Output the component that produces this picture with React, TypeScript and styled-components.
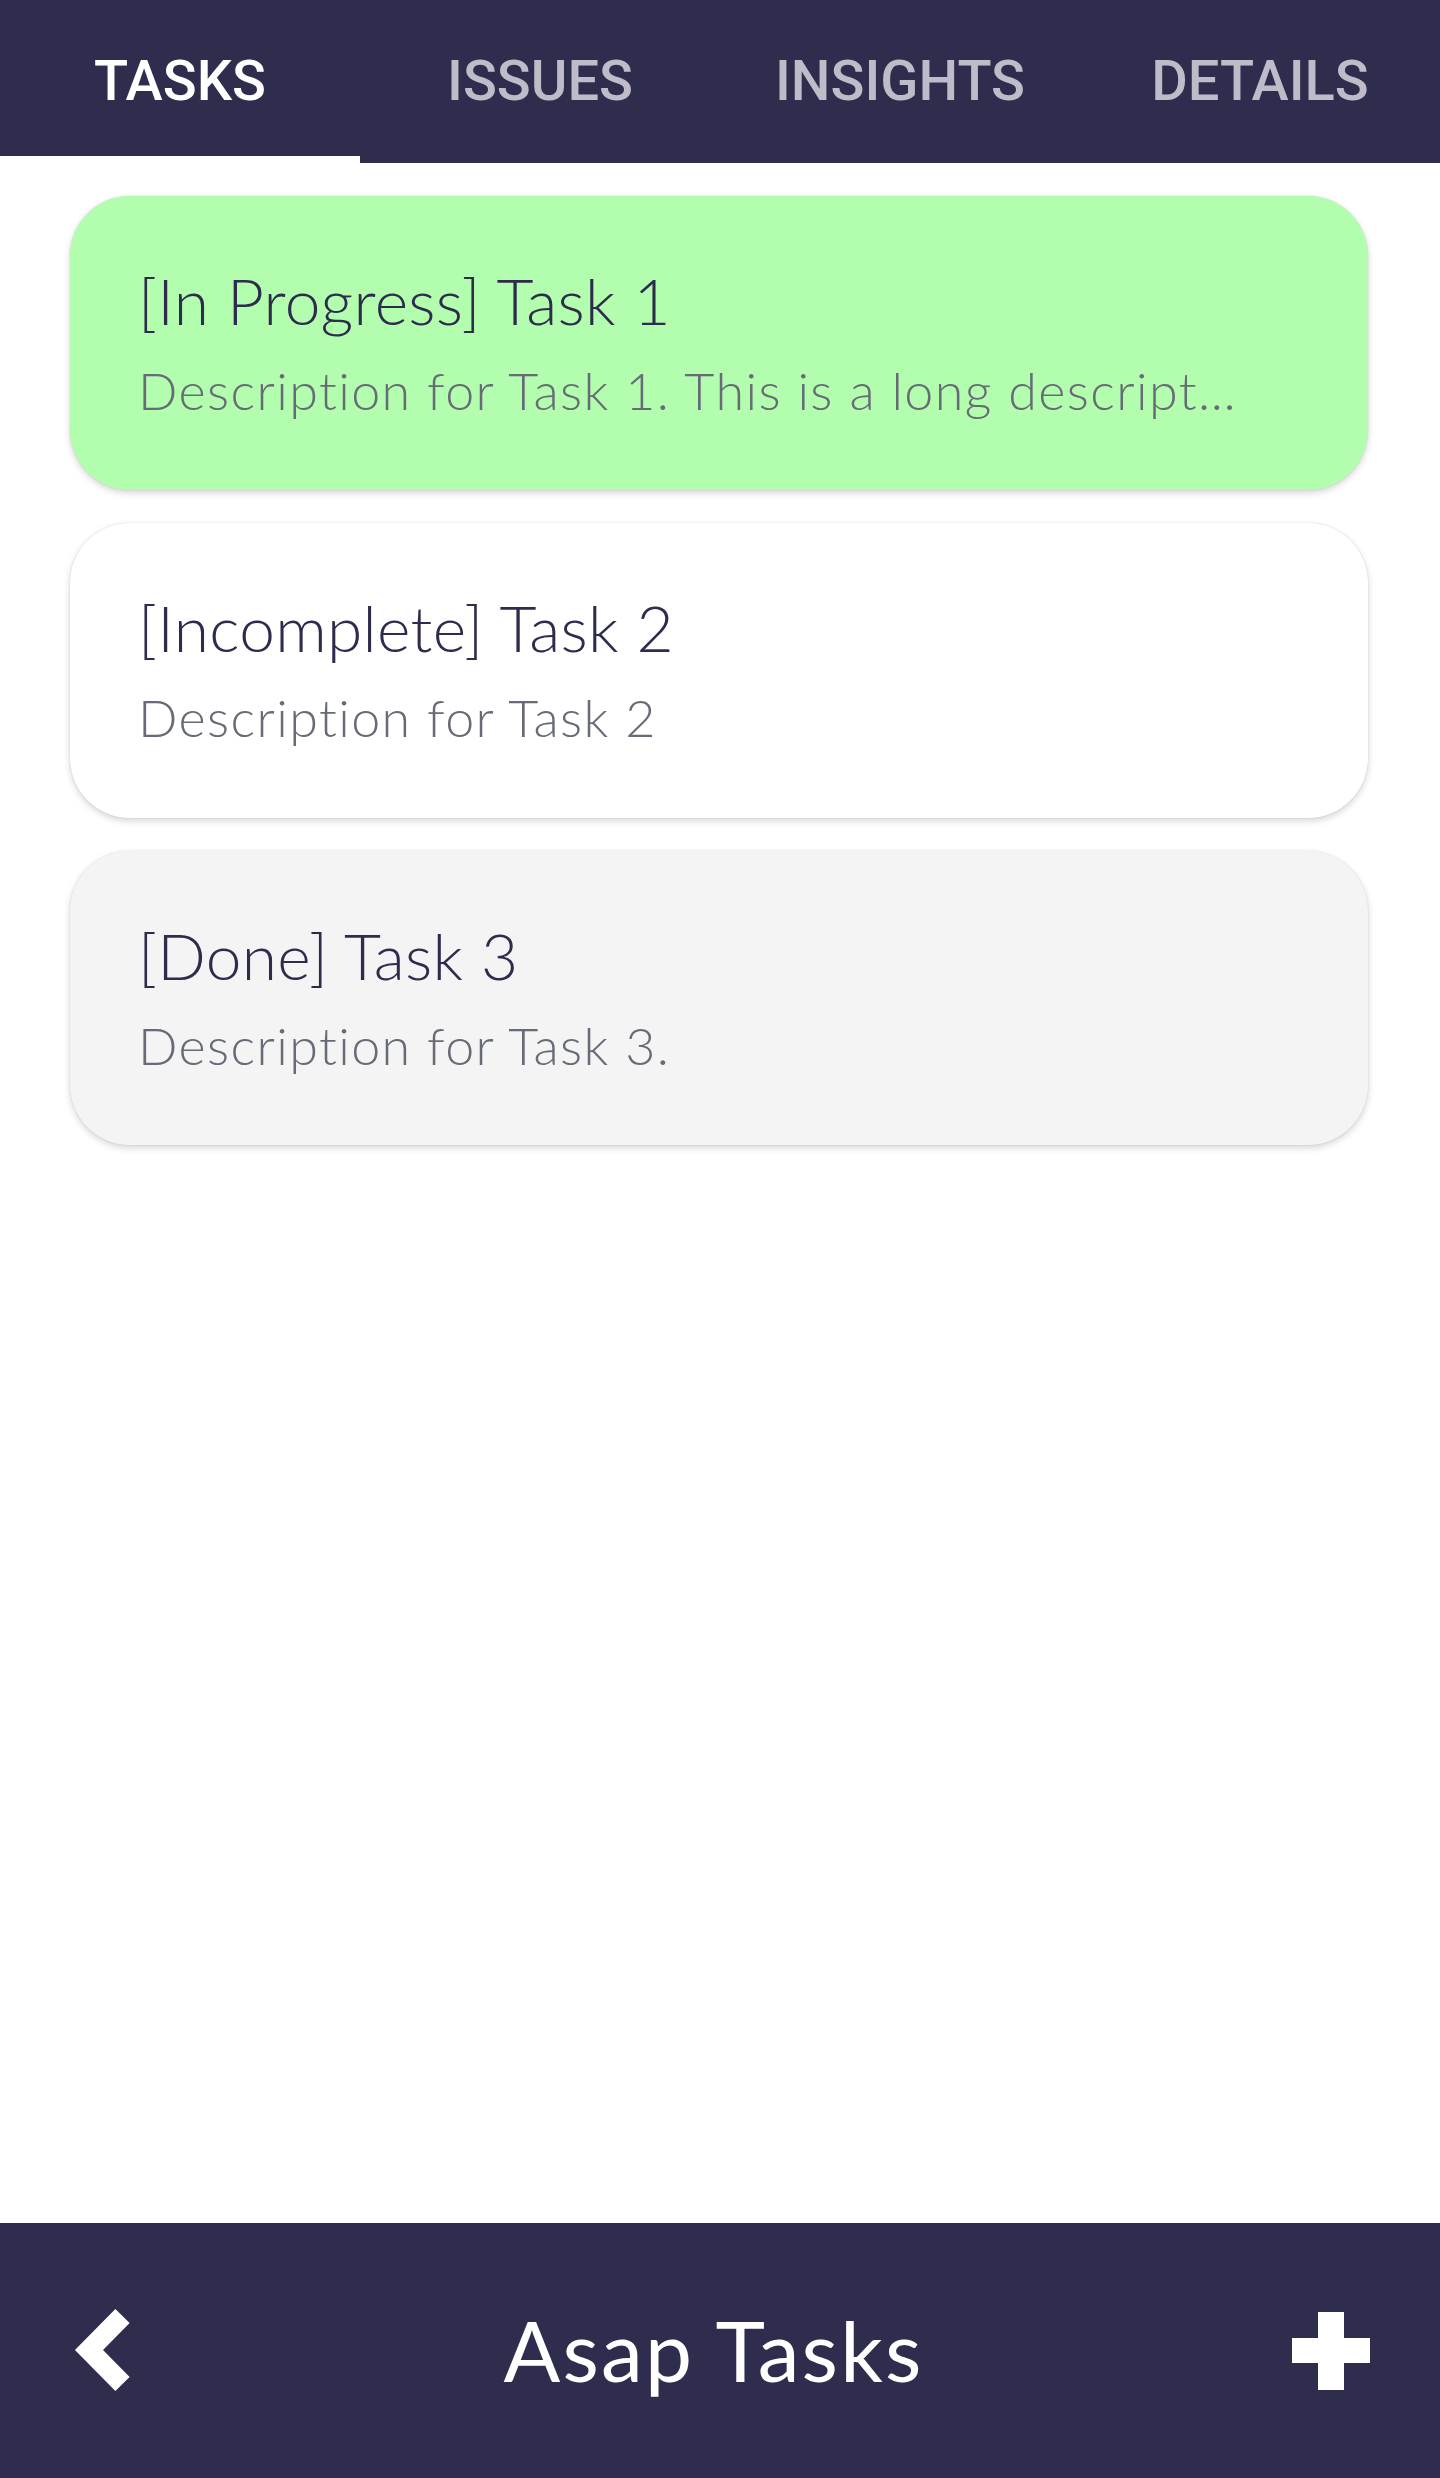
import React from "react";
import styled, { createGlobalStyle } from "styled-components";

type Status = "In Progress" | "Incomplete" | "Done";

interface TaskItem {
  id: number;
  title: string;
  description: string;
  status: Status;
}

const tasks: TaskItem[] = [
  {
    id: 1,
    title: "Task 1",
    description:
      "Description for Task 1. This is a long description that keeps going past the edge of the card.",
    status: "In Progress",
  },
  { id: 2, title: "Task 2", description: "Description for Task 2", status: "Incomplete" },
  { id: 3, title: "Task 3", description: "Description for Task 3.", status: "Done" },
];

const tabs = ["Tasks", "Issues", "Insights", "Details"];

const cardColors: Record<Status, string> = {
  "In Progress": "#b2fdae",
  Incomplete: "#ffffff",
  Done: "#f4f4f4",
};

const GlobalStyle = createGlobalStyle`
  html, body {
    margin: 0;
    padding: 0;
    background: #ffffff;
  }
  * {
    box-sizing: border-box;
  }
`;

const Screen = styled.div`
  display: flex;
  flex-direction: column;
  min-height: 100vh;
  font-family: Lato, "Open Sans", sans-serif;
`;

const TabBar = styled.nav`
  display: flex;
  height: 163px;
  background: #2f2d4d;
`;

const Tab = styled.button<{ active: boolean }>`
  flex: 1;
  border: none;
  background: transparent;
  padding: 0 0 2px;
  font-family: Roboto, "Liberation Sans", sans-serif;
  font-weight: 500;
  font-size: 56px;
  letter-spacing: 0;
  text-transform: uppercase;
  color: ${(props) => (props.active ? "#ffffff" : "#bebcc9")};
  box-shadow: ${(props) => (props.active ? "inset 0 -7px 0 #ffffff" : "none")};
  cursor: pointer;
`;

const TaskList = styled.main`
  flex: 1;
  display: flex;
  flex-direction: column;
  gap: 33px;
  padding: 33px 72px 33px 70px;
`;

const Card = styled.div<{ status: Status }>`
  display: flex;
  flex-direction: column;
  gap: 26px;
  padding: 73px 124px 69px 68px;
  border-radius: 60px;
  background: ${(props) => cardColors[props.status]};
  box-shadow: 0 3px 7px rgba(0, 0, 0, 0.16), 0 0 2px rgba(0, 0, 0, 0.12);
`;

const CardTitle = styled.h3`
  margin: 0;
  font-weight: 300;
  font-size: 64px;
  line-height: 1;
  letter-spacing: 0.3px;
  color: #2e2c4c;
`;

const CardDescription = styled.p`
  margin: 0;
  font-weight: 300;
  font-size: 52px;
  line-height: 1.2;
  letter-spacing: 1.4px;
  color: #676b76;
  white-space: nowrap;
  overflow: hidden;
  text-overflow: ellipsis;
`;

const BottomBar = styled.footer`
  display: flex;
  align-items: center;
  height: 255px;
  padding: 0 70px;
  background: #2f2d4d;
`;

const IconButton = styled.button`
  display: flex;
  align-items: center;
  justify-content: center;
  padding: 0;
  border: none;
  background: transparent;
  cursor: pointer;
`;

const ScreenTitle = styled.h1`
  flex: 1;
  margin: 0;
  text-align: center;
  font-weight: 400;
  font-size: 84px;
  line-height: 1.2;
  letter-spacing: 2.2px;
  color: #ffffff;
`;

const BackIcon = () => (
  <svg width="65" height="100" viewBox="0 0 65 100">
    <polyline
      points="52.5,15 19,49 52.5,83"
      fill="none"
      stroke="#ffffff"
      strokeWidth="20"
      strokeLinejoin="miter"
    />
  </svg>
);

const PlusIcon = () => (
  <svg width="78" height="78" viewBox="0 0 78 78">
    <rect x="26" y="0" width="26" height="78" fill="#ffffff" />
    <rect x="0" y="26" width="78" height="25" fill="#ffffff" />
  </svg>
);

const App: React.FC = () => {
  const activeTab = "Tasks";

  return (
    <>
      <GlobalStyle />
      <Screen>
        <TabBar>
          {tabs.map((tab) => (
            <Tab key={tab} active={tab === activeTab}>
              {tab}
            </Tab>
          ))}
        </TabBar>
        <TaskList>
          {tasks.map((task) => (
            <Card key={task.id} status={task.status}>
              <CardTitle>
                [{task.status}] {task.title}
              </CardTitle>
              <CardDescription>{task.description}</CardDescription>
            </Card>
          ))}
        </TaskList>
        <BottomBar>
          <IconButton aria-label="Back">
            <BackIcon />
          </IconButton>
          <ScreenTitle>Asap Tasks</ScreenTitle>
          <IconButton aria-label="Add task">
            <PlusIcon />
          </IconButton>
        </BottomBar>
      </Screen>
    </>
  );
};

export default App;
